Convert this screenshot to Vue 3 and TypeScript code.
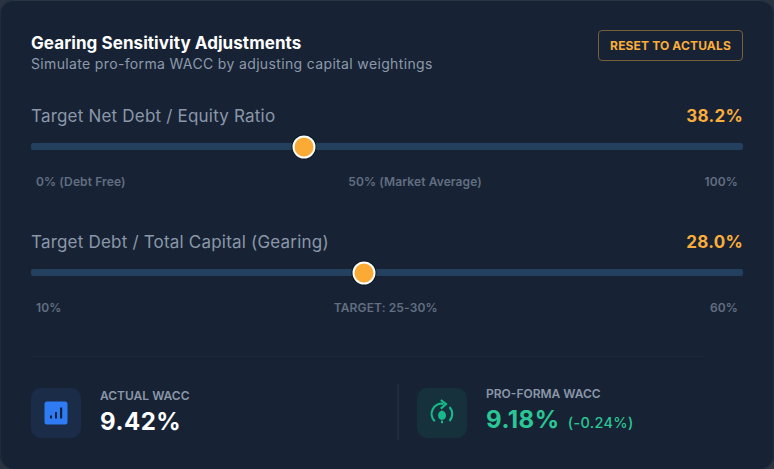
<script setup lang="ts">
interface Slider {
  label: string
  value: string
  pos: number
  ticks: string[]
}

const sliders: Slider[] = [
  {
    label: 'Target Net Debt / Equity Ratio',
    value: '38.2%',
    pos: 38.3,
    ticks: ['0% (Debt Free)', '50% (Market Average)', '100%'],
  },
  {
    label: 'Target Debt / Total Capital (Gearing)',
    value: '28.0%',
    pos: 46.8,
    ticks: ['10%', 'TARGET: 25-30%', '60%'],
  },
]
</script>

<template>
  <div class="card">
    <div class="head">
      <div>
        <h2 class="title">Gearing Sensitivity Adjustments</h2>
        <p class="sub">Simulate pro-forma WACC by adjusting capital weightings</p>
      </div>
      <button class="reset">RESET TO ACTUALS</button>
    </div>

    <div class="sliders">
      <div v-for="s in sliders" :key="s.label" class="slider">
        <div class="slider-top">
          <span class="slider-label">{{ s.label }}</span>
          <span class="slider-value">{{ s.value }}</span>
        </div>
        <div class="track">
          <span class="thumb" :style="{ left: `${s.pos}%` }"></span>
        </div>
        <div class="ticks">
          <span v-for="t in s.ticks" :key="t">{{ t }}</span>
        </div>
      </div>
    </div>

    <div class="stats">
      <div class="stat">
        <div class="icon icon-blue">
          <svg width="24" height="24" viewBox="0 0 24 24">
            <rect x="0.5" y="0.5" width="23" height="23" rx="2.5" fill="#2f7bf3" />
            <rect x="6" y="14.5" width="2" height="3" fill="#14233c" />
            <rect x="11" y="11" width="2" height="6.5" fill="#14233c" />
            <rect x="16" y="6.5" width="2.2" height="11" fill="#14233c" />
          </svg>
        </div>
        <div>
          <div class="stat-label">ACTUAL WACC</div>
          <div class="stat-value">9.42%</div>
        </div>
      </div>
      <div class="stat stat-right">
        <div class="icon icon-green">
          <svg width="28" height="28" viewBox="0 0 28 28" fill="none">
            <path d="M6.7 22.3A10.3 10.3 0 0 1 15.5 4.8" stroke="#17b88a" stroke-width="2.2" />
            <path d="M12.8 1 18 5 12.8 9.6" stroke="#17b88a" stroke-width="2.2" />
            <path d="M21.5 8A10.3 10.3 0 0 1 21.5 22" stroke="#17b88a" stroke-width="2.2" />
            <path d="M13 11.5C15.8 12.4 17 14.4 17 16.6 17 19.2 15.2 21 13 21 10.8 21 9 19.2 9 16.6 9 14.4 10.2 12.4 13 11.5Z" transform="translate(1 0)" fill="#17b88a" />
            <rect x="13" y="21.6" width="2" height="2.6" fill="#17b88a" />
          </svg>
        </div>
        <div>
          <div class="stat-label">PRO-FORMA WACC</div>
          <div class="stat-value green">9.18% <span class="delta">(-0.24%)</span></div>
        </div>
      </div>
    </div>
  </div>
</template>

<style>
html,
body {
  background: #2a3441;
}
</style>

<style scoped>
.card {
  box-sizing: border-box;
  width: 774px;
  height: 469px;
  padding: 31px 31px 0;
  background: #172334;
  border-radius: 14px;
  box-shadow: inset 0 1px 0 #2a3544, inset 1px 0 0 #212c3c, inset -1px 0 0 #212c3c;
  font-family: Inter, "Liberation Sans", sans-serif;
  overflow: hidden;
}
.head {
  display: flex;
  justify-content: space-between;
  align-items: flex-start;
  height: 74px;
}
.title {
  margin: 0;
  font-size: 17px;
  line-height: 24px;
  font-weight: 700;
  letter-spacing: 0.07px;
  color: #fff;
}
.sub {
  margin: 0;
  font-size: 14px;
  line-height: 18px;
  letter-spacing: 0.35px;
  color: #8d99ab;
}
.reset {
  width: 145px;
  height: 31px;
  margin-top: -1px;
  padding: 0;
  background: transparent;
  border: 1px solid #76603c;
  border-radius: 4px;
  color: #fbad3c;
  font-family: inherit;
  font-size: 12px;
  font-weight: 700;
  letter-spacing: 0.15px;
}
.sliders {
  display: grid;
  gap: 1px;
}
.slider {
  height: 125px;
}
.slider-top {
  display: flex;
  justify-content: space-between;
  align-items: center;
  height: 22px;
}
.slider-label {
  font-size: 17px;
  letter-spacing: 0.2px;
  color: #8b97a9;
}
.slider-value {
  font-size: 17px;
  font-weight: 700;
  letter-spacing: 0.3px;
  color: #fbad3c;
}
.track {
  position: relative;
  height: 7px;
  margin-top: 16px;
  background: #23405f;
  border-radius: 2px;
}
.thumb {
  position: absolute;
  top: 50%;
  box-sizing: border-box;
  width: 23px;
  height: 23px;
  background: #fbaa35;
  border: 2.5px solid #fff;
  border-radius: 50%;
  box-shadow: 0 0 0 1px #0c1522;
  transform: translate(-50%, -50%);
}
.ticks {
  display: flex;
  justify-content: space-between;
  margin-top: 24px;
  padding: 0 5px;
  font-size: 12px;
  line-height: 16px;
  font-weight: 600;
  letter-spacing: 0.12px;
  color: #626e81;
}
.stats {
  display: grid;
  grid-template-columns: 366px 1fr;
  padding-top: 27px;
  border-top: 1px solid #1e2a3b;
  margin-right: 38px;
}
.stat {
  display: flex;
  align-items: center;
  gap: 19px;
  height: 56px;
}
.stat-right {
  padding-left: 18px;
  border-left: 2px solid #202c3d;
}
.icon {
  display: flex;
  align-items: center;
  justify-content: center;
  width: 50px;
  height: 50px;
  margin-top: 1px;
  border-radius: 10px;
}
.icon-blue {
  background: #1a2c47;
}
.icon-green {
  background: #16313b;
}
.stat-label {
  margin-bottom: 3px;
  font-size: 12px;
  line-height: 16px;
  font-weight: 600;
  color: #8b97a9;
}
.stat-value {
  font-size: 24px;
  line-height: 30px;
  font-weight: 700;
  letter-spacing: 0.5px;
  color: #fff;
}
.green {
  color: #2ac795;
}
.delta {
  margin-left: 2px;
  font-size: 14.5px;
  font-weight: 500;
  letter-spacing: 0.3px;
}
</style>
